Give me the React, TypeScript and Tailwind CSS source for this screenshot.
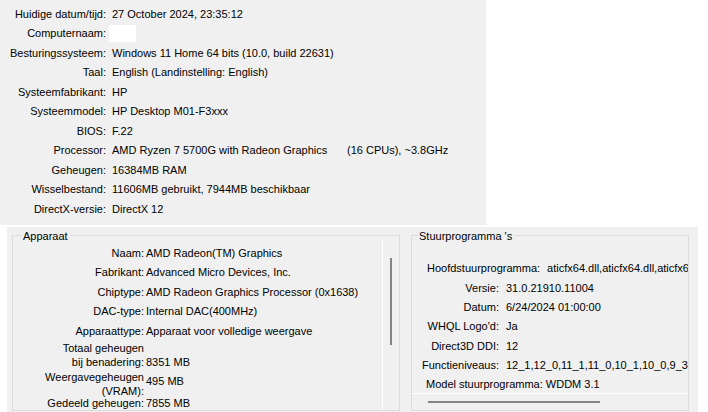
const systemRows: [string, string][] = [
  ["Huidige datum/tijd:", "27 October 2024, 23:35:12"],
  ["Computernaam:", ""],
  ["Besturingssysteem:", "Windows 11 Home 64 bits (10.0, build 22631)"],
  ["Taal:", "English (Landinstelling: English)"],
  ["Systeemfabrikant:", "HP"],
  ["Systeemmodel:", "HP Desktop M01-F3xxx"],
  ["BIOS:", "F.22"],
  ["Processor:", ""],
  ["Geheugen:", "16384MB RAM"],
  ["Wisselbestand:", "11606MB gebruikt, 7944MB beschikbaar"],
  ["DirectX-versie:", "DirectX 12"],
];

const deviceRows: [string, string][] = [
  ["Naam:", "AMD Radeon(TM) Graphics"],
  ["Fabrikant:", "Advanced Micro Devices, Inc."],
  ["Chiptype:", "AMD Radeon Graphics Processor (0x1638)"],
  ["DAC-type:", "Internal DAC(400MHz)"],
  ["Apparaattype:", "Apparaat voor volledige weergave"],
];

const driverRows: [string, string][] = [
  ["Versie:", "31.0.21910.11004"],
  ["Datum:", "6/24/2024 01:00:00"],
  ["WHQL Logo'd:", "Ja"],
  ["Direct3D DDI:", "12"],
  ["Functieniveaus:", "12_1,12_0,11_1,11_0,10_1,10_0,9_3"],
];

const SystemInfo = () => (
  <div className="w-[486px] h-[225px] bg-[#f0f0f0] pt-[4px]">
    {systemRows.map(([label, value]) => (
      <div key={label} className="flex items-center h-[19.5px] whitespace-nowrap">
        <span className="w-[106px] text-right">{label}</span>
        <span className="ml-[6px]">
          {label === "Computernaam:" ? (
            <div className="-ml-[3px] w-[27px] h-[17px] bg-white" />
          ) : label === "Processor:" ? (
            <>
              <span className="inline-block w-[235px]">AMD Ryzen 7 5700G with Radeon Graphics</span>
              (16 CPUs), ~3.8GHz
            </>
          ) : (
            value
          )}
        </span>
      </div>
    ))}
  </div>
);

const DevicePanel = () => (
  <div className="relative ml-[5px] mt-[8px] w-[388px] h-[176px] border border-[#dcdcdc]">
    <span className="absolute left-[8px] top-[-7px] px-[2px] leading-[14px] bg-[#f0f0f0]">Apparaat</span>
    <div className="flex h-full">
      <div className="w-[369px] h-full overflow-hidden pt-[7px] whitespace-nowrap">
        {deviceRows.map(([label, value]) => (
          <div key={label} className="flex items-center h-[19.5px]">
            <span className="w-[131px] text-right">{label}</span>
            <span className="ml-[2px]">{value}</span>
          </div>
        ))}
        <div className="flex items-end h-[28px] leading-[14px]">
          <span className="w-[131px] text-right">
            Totaal geheugen
            <br />
            bij benadering:
          </span>
          <span className="ml-[2px]">8351 MB</span>
        </div>
        <div className="flex items-start h-[26px] mt-[1px] leading-[14px]">
          <span className="w-[131px] text-right">
            Weergavegeheugen
            <br />
            (VRAM):
          </span>
          <span className="ml-[2px] mt-[4px]">495 MB</span>
        </div>
        <div className="flex leading-[14px]">
          <span className="w-[131px] text-right">Gedeeld geheugen:</span>
          <span className="ml-[2px]">7855 MB</span>
        </div>
      </div>
      <div className="w-[16px] mt-[5px] border-l border-white">
        <div className="ml-[7px] mt-[17px] w-[2px] h-[87px] bg-[#858585]" />
      </div>
    </div>
  </div>
);

const DriverPanel = () => (
  <div className="relative ml-[11px] mt-[8px] w-[278px] h-[176px] border border-[#dcdcdc]">
    <span className="absolute left-[5px] top-[-7px] px-[2px] leading-[14px] bg-[#f0f0f0]">Stuurprogramma 's</span>
    <div className="h-[157px] overflow-hidden pt-[23px] whitespace-nowrap">
      <div className="flex items-center h-[19.3px] pl-[15px]">
        <span>Hoofdstuurprogramma:</span>
        <span className="ml-[7px]">aticfx64.dll,aticfx64.dll,aticfx64.dll</span>
      </div>
      {driverRows.map(([label, value]) => (
        <div key={label} className="flex items-center h-[19.3px]">
          <span className="w-[87px] shrink-0 text-right">{label}</span>
          <span className="ml-[7px]">{value}</span>
        </div>
      ))}
      <div className="flex items-center h-[19.3px] pl-[14px]">Model stuurprogramma: WDDM 3.1</div>
    </div>
    <div className="border-t border-white h-[17px]">
      <div className="ml-[16px] mt-[7px] w-[172px] h-[2px] bg-[#858585]" />
    </div>
  </div>
);

export default function App() {
  return (
    <div className="w-[708px] h-[412px] bg-white overflow-hidden text-[11px] text-black font-['Liberation_Sans',Arial,sans-serif]">
      <SystemInfo />
      <div className="mt-[2px] ml-[7px] w-[691px] h-[185px] bg-[#f0f0f0] flex items-start">
        <DevicePanel />
        <DriverPanel />
      </div>
    </div>
  );
}
